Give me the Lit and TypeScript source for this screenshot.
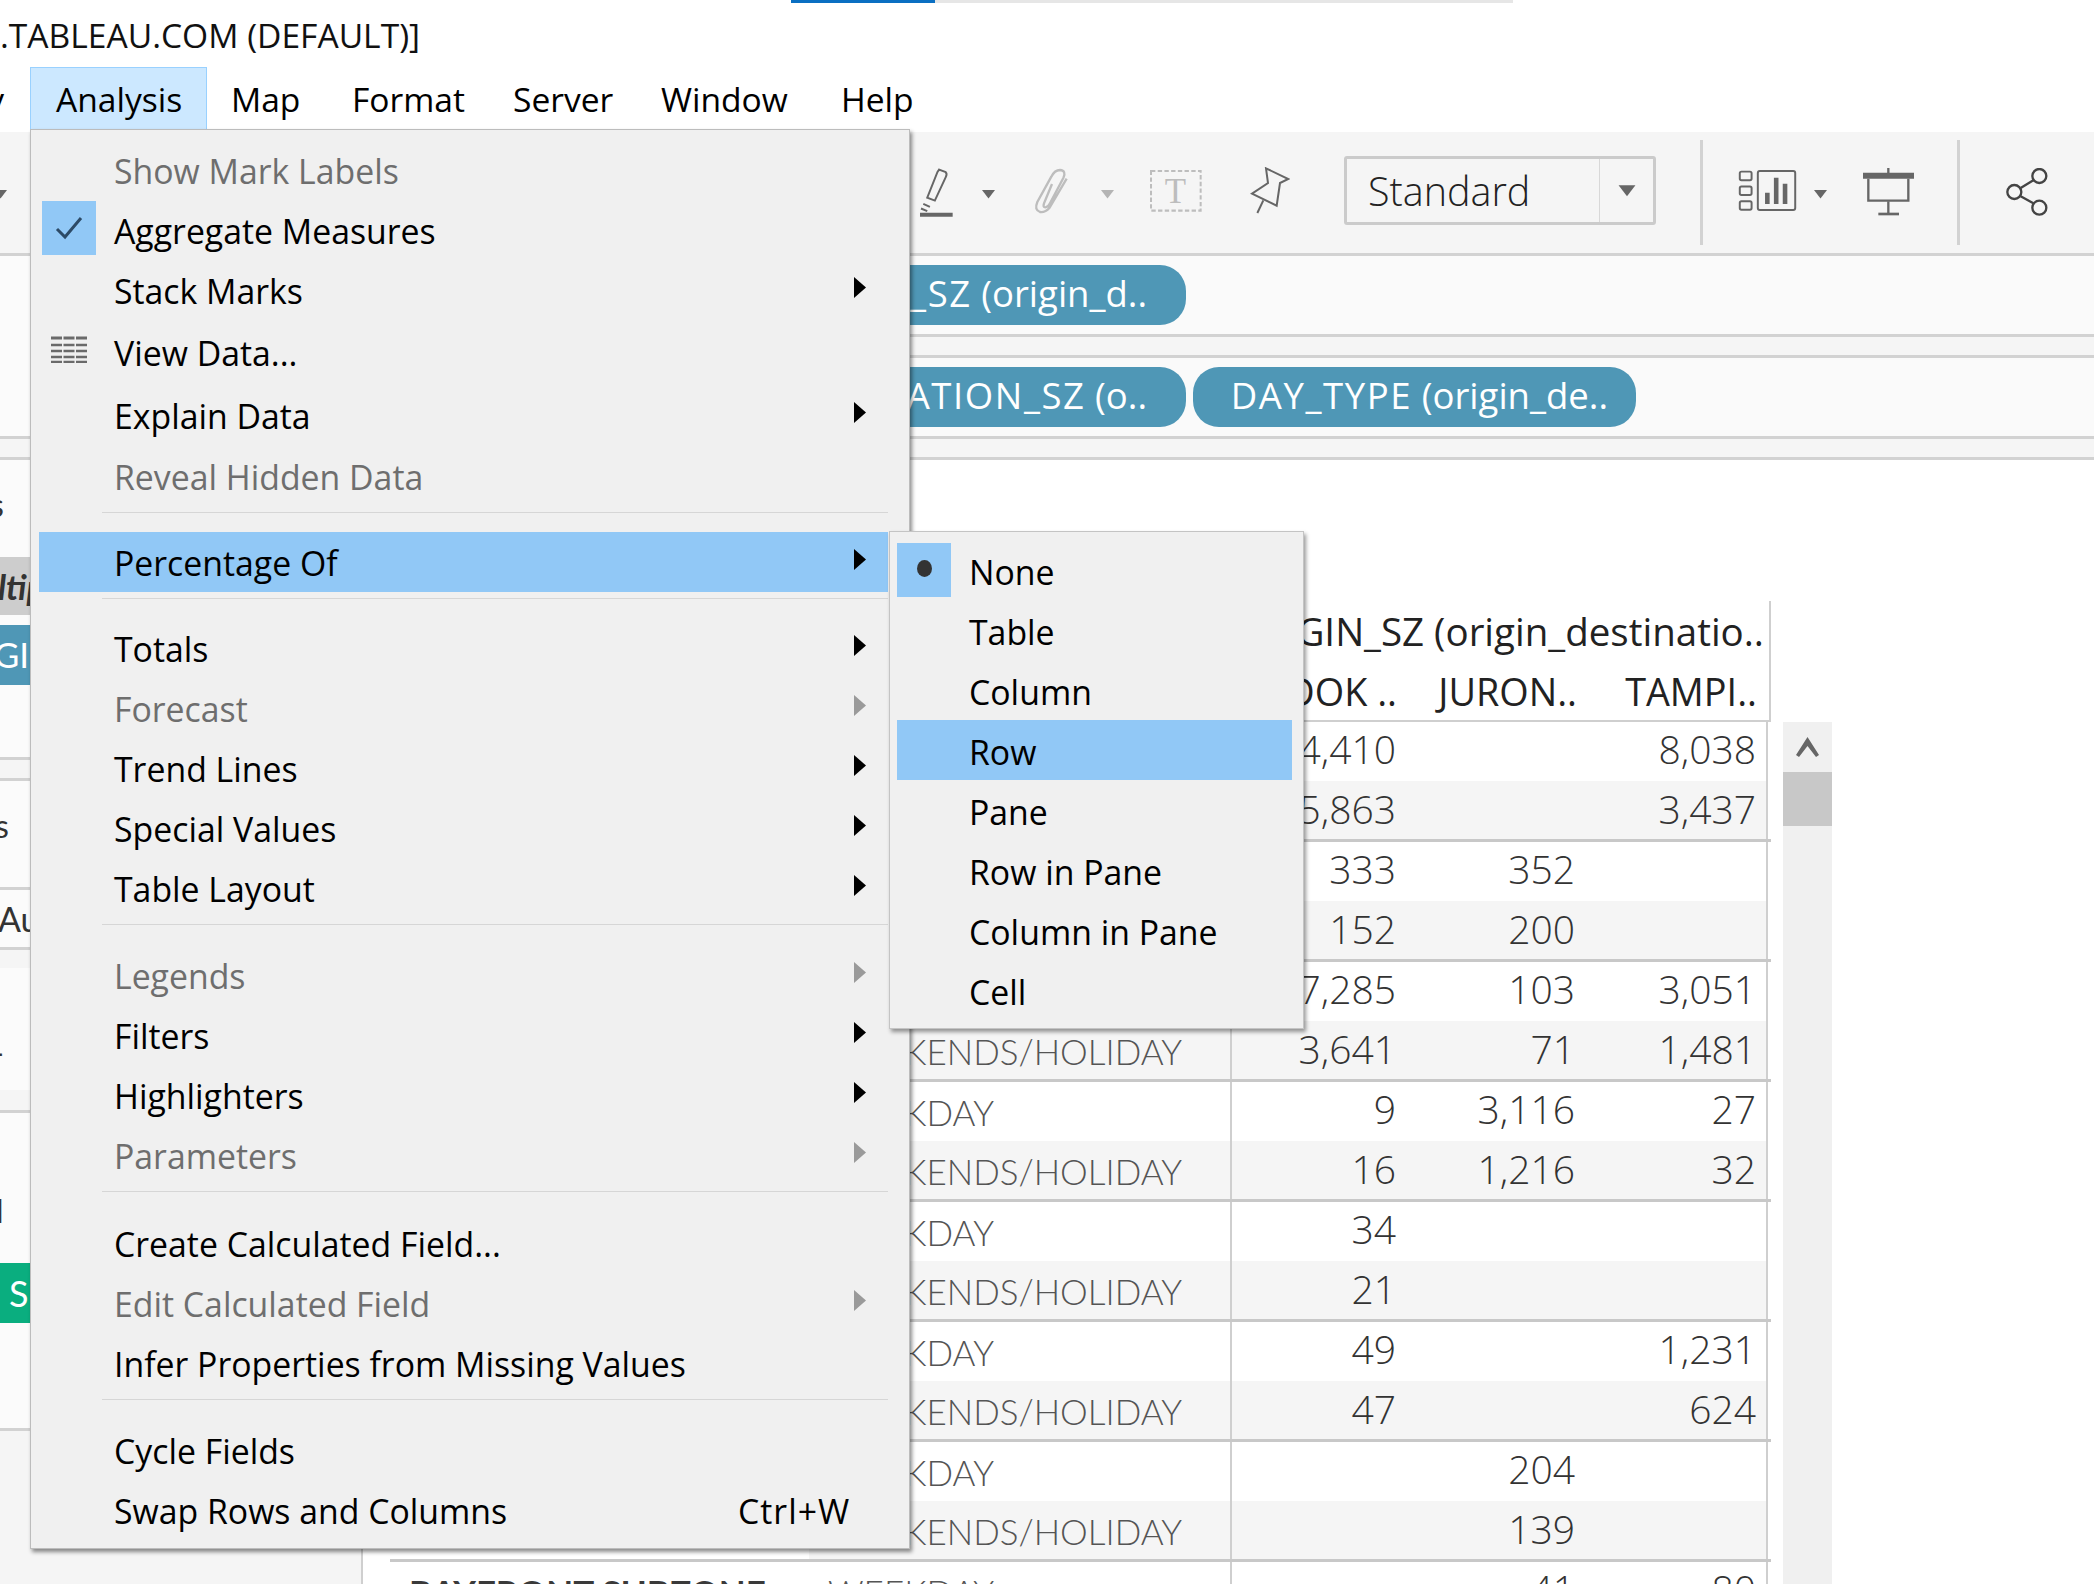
import { LitElement, html, css, svg, nothing } from "lit";
import { customElement } from "lit/decorators.js";

const tri = (cls: string) => html`<svg class="tri ${cls}" viewBox="0 0 15 10"><path d="M1 1H14L7.5 9.5Z" /></svg>`;

type Item = { t: string; off?: boolean; sub?: boolean; on?: boolean; h?: number; sep?: boolean; check?: boolean; grid?: boolean; key?: string };

const MENU: Item[] = [
  { t: "Show Mark Labels", off: true },
  { t: "Aggregate Measures", check: true },
  { t: "Stack Marks", sub: true },
  { t: "View Data...", grid: true, h: 64 },
  { t: "Explain Data", sub: true, h: 62 },
  { t: "Reveal Hidden Data", off: true },
  { t: "", sep: true, h: 26 },
  { t: "Percentage Of", sub: true, on: true },
  { t: "", sep: true, h: 26 },
  { t: "Totals", sub: true },
  { t: "Forecast", sub: true, off: true },
  { t: "Trend Lines", sub: true },
  { t: "Special Values", sub: true },
  { t: "Table Layout", sub: true },
  { t: "", sep: true, h: 27 },
  { t: "Legends", sub: true, off: true },
  { t: "Filters", sub: true },
  { t: "Highlighters", sub: true },
  { t: "Parameters", sub: true, off: true },
  { t: "", sep: true, h: 28 },
  { t: "Create Calculated Field..." },
  { t: "Edit Calculated Field", sub: true, off: true },
  { t: "Infer Properties from Missing Values" },
  { t: "", sep: true, h: 27 },
  { t: "Cycle Fields" },
  { t: "Swap Rows and Columns", key: "Ctrl+W" },
];

const SUB = ["None", "Table", "Column", "Row", "Pane", "Row in Pane", "Column in Pane", "Cell"];

const GROUPS: string[][][] = [
  [["4,410", "", "8,038"], ["5,863", "", "3,437"]],
  [["333", "352", ""], ["152", "200", ""]],
  [["7,285", "103", "3,051"], ["3,641", "71", "1,481"]],
  [["9", "3,116", "27"], ["16", "1,216", "32"]],
  [["34", "", ""], ["21", "", ""]],
  [["49", "", "1,231"], ["47", "", "624"]],
  [["", "204", ""], ["", "139", ""]],
];

const gridIcon = svg`<svg class="gridicon" viewBox="0 0 36 27"><path d="M0 2H36" stroke-width="3" stroke-dasharray="11 1.5"/><path d="M0 9H36M0 15H36M0 21H36M0 26H36" stroke-width="2.4" stroke-dasharray="11 1.5"/></svg>`;

@customElement("app-root")
export class AppRoot extends LitElement {
  static styles = css`
    :host { display: block; width: 2094px; height: 1584px; overflow: hidden; position: relative; background: #fff; font-family: "Open Sans", sans-serif; color: #000; }
    .tabbar { display: flex; height: 3px; padding-left: 791px; }
    .tabbar .a { width: 144px; background: #0a6fc2; }
    .tabbar .b { width: 578px; background: #e6e6e6; }
    .title { height: 64px; display: flex; align-items: center; font-size: 33.6px; white-space: nowrap; color: #111; box-sizing: border-box; }
    .menubar { height: 63px; display: flex; font-size: 33.6px; }
    .edge { width: 30px; display: flex; justify-content: flex-end; align-items: center; white-space: nowrap; overflow: hidden; padding-right: 26px; box-sizing: border-box; }
    .mi { display: flex; align-items: center; box-sizing: border-box; padding: 0; }
    .mi.open { background: #cce8ff; border: 1px solid #99d1ff; border-bottom: 0; width: 177px; padding: 0 0 0 25px; }
    .mi.m1 { padding: 0 0 0 24px; width: 145px; }
    .mi.m2 { width: 161px; }
    .mi.m3 { width: 148px; }
    .mi.m4 { width: 180px; }
    .toolbar { margin-top: 2px; height: 124px; box-sizing: border-box; background: #f5f5f5; border-bottom: 3px solid #d2d2d2; display: flex; align-items: center; position: relative; }
    .tb-left { width: 920px; flex: none; }
    .tb-left .tri { display: block; width: 15px; height: 10px; margin-left: -7px; fill: #666; }
    .tri { display: block; width: 15px; height: 10px; fill: #666; flex: none; margin-top: 3px; }
    .tri.light { fill: #b4b4b4; }
    .icon { display: block; flex: none; fill: none; stroke: #666; }
    .i-mark { width: 33px; height: 50px; margin: -2px 28px 0 0; }
    .i-clip { width: 36px; height: 46px; margin: -3px 30px 0 38px; }
    .i-clip path { stroke: #bdbdbd; }
    .i-text { width: 52px; height: 42px; margin: -4px 48px 0 35px; }
    .i-text text { font-family: "Liberation Serif", serif; font-size: 104px; fill: #bdbdbd; stroke: none; }
    .i-pin { width: 40px; height: 47px; margin: -4px 54px 0 0; }
    .i-show { width: 59px; height: 41px; margin: -4px 16px 0 35px; }
    .i-pres { width: 51px; height: 48px; margin: -2px 43px 0 35px; }
    .i-share { width: 42px; height: 48px; margin: -2px 0 0 46px; stroke: #444; }
    .combo { width: 312px; height: 69px; box-sizing: border-box; border: 3px solid #cbcbcb; border-radius: 3px; display: flex; margin: 0 0 4px 0; flex: none; }
    .combo .val { width: 253px; box-sizing: border-box; padding-left: 21px; font-size: 39.5px; font-weight: 300; color: #222; display: flex; align-items: center; border-right: 1px solid #d8d8d8; }
    .combo .drop { flex: 1; display: flex; align-items: center; justify-content: center; }
    .combo .drop .tri { width: 22px; height: 13px; margin-top: 0; }
    .vsep { width: 3px; height: 105px; background: #d2d2d2; flex: none; }
    .vsep.first { margin-left: 44px; }
    .body { display: flex; height: 1328px; }
    .side { width: 361px; flex: none; background: #f5f5f5; border-right: 2px solid #cfcfcf; font-family: Lato, sans-serif; color: #333; font-size: 32px; overflow: hidden; white-space: nowrap; }
    .card { background: #fbfbfb; border-bottom: 3px solid #d2d2d2; display: flex; flex-direction: column; }
    .c180 { height: 180px; }
    .c297 { height: 297px; }
    .c106 { height: 106px; }
    .c57 { height: 57px; }
    .c195 { height: 195px; }
    .gap { background: #f5f5f5; border-bottom: 3px solid #d2d2d2; height: 18px; }
    .gap.g20 { height: 20px; }
    .spacer { height: 18px; }
    .fr { display: flex; align-items: center; flex: none; }
    .f97 { height: 88px; }
    .f97 span { margin-left: -78px; }
    .f88 { height: 88px; }
    .f88 span { margin-left: -78px; }
    .multi { background: #cdcdcd; height: 58px; margin-top: 9px; font-style: italic; font-weight: 700; font-size: 34px; color: #333; }
    .multi span { margin-left: -50px; }
    .spill { height: 60px; margin-top: 10px; background: #4f97b6; color: #fff; font-size: 35px; padding-bottom: 3px; box-sizing: border-box; }
    .spill span { margin-left: -66px; }
    .auto { height: 57px; font-size: 34px; }
    .auto span { margin-left: -2px; }
    .inner { border-right: 4px solid #d2d2d2; background: #fbfbfb; width: 357px; }
    .in1 { height: 122px; }
    .in2 { height: 120px; }
    .d1 { height: 168px; }
    .d1 span { margin-left: -8px; }
    .d2 { height: 194px; }
    .d2 span { margin-left: -4px; }
    .green { height: 60px; background: #0aae7f; color: #fff; margin-top: 30px; padding-left: 9px; font-size: 36px; }
    .main { flex: 1; min-width: 0; }
    .shelf { height: 78px; background: #fafafa; border-bottom: 3px solid #d2d2d2; display: flex; align-items: center; gap: 7px; font-size: 36.5px; color: #fff; }
    .pill { height: 60px; border-radius: 26px; background: #4f97b6; display: flex; align-items: center; justify-content: flex-end; box-sizing: border-box; padding: 0 28px 5px 0; white-space: nowrap; flex: none; overflow: hidden; }
    .pill .caps { letter-spacing: 1.6px; }
    .pill.first { width: 523px; padding-right: 39px; margin-left: 300px; }
    .pill.day { width: 443px; }
    .hgap { height: 18px; background: #f5f5f5; border-bottom: 3px solid #d2d2d2; }
    .canvas { display: flex; padding: 141px 0 0 27px; gap: 12px; font-size: 39px; font-weight: 300; background: #fff; height: 900px; }
    .tbl { width: 1381px; flex: none; }
    .heads { margin-left: 841px; width: 540px; height: 121px; border-right: 2px solid #cfcfcf; border-bottom: 2px solid #cfcfcf; box-sizing: border-box; color: #222; font-size: 37.8px; font-weight: 400; }
    .h1 { height: 60px; display: flex; align-items: center; justify-content: flex-end; padding-right: 5px; white-space: nowrap; overflow: hidden; font-size: 38.5px; }
    .h2 { display: grid; grid-template-columns: 166px 180px 180px; height: 58px; align-items: center; padding: 1px 12px 0 0; text-align: right; }
    .h2 span { white-space: nowrap; }
    .grp { border-bottom: 3px solid #c8c8c8; }
    .row { display: grid; grid-template-columns: 419px 421px 178px 180px 180px; height: 58.5px; align-items: center; position: relative; }
    .row.alt .cell, .row.alt .lab { background: #f5f5f5; }
    .row.alt .cell { padding-bottom: 3px; }
    .cell, .lab { height: 100%; display: flex; align-items: center; box-sizing: border-box; padding-bottom: 5px; color: #333; }
    .cell { justify-content: flex-end; padding-right: 13px; }
    .cell.first { border-left: 2px solid #cfcfcf; padding-right: 12px; }
    .cell.last { border-right: 2px solid #cfcfcf; padding-right: 10px; }
    .lab { font-family: Lato, sans-serif; font-size: 35px; font-weight: 300; color: #555; padding: 2px 0 0 19px; white-space: nowrap; }
    .name { font-family: Lato, sans-serif; color: #3a3a3a; font-weight: 700; white-space: nowrap; display: flex; align-items: center; height: 100%; padding: 2px 0 0 19px; box-sizing: border-box; font-size: 35px; }
    .scroll { width: 49px; margin-top: 121px; background: #f0f0f0; display: flex; flex-direction: column; align-items: center; flex: none; height: 900px; }
    .scroll svg { display: block; width: 23px; height: 20px; margin: 15px 0; fill: #666; }
    .thumb { width: 100%; height: 54px; background: #c8c8c8; }
    .menu { position: absolute; left: 30px; top: 129px; width: 880px; height: 1420px; box-sizing: border-box; background: #f0f0f0; border: 1px solid #bcbcbc; box-shadow: 2px 3px 4px rgba(0,0,0,.45); padding: 10px 21px 0 8px; font-size: 33.8px; }
    .item { height: 60px; display: flex; align-items: center; position: relative; padding: 1px 0 0 75px; box-sizing: border-box; white-space: nowrap; }
    .item .arrow { position: absolute; left: 815px; top: 50%; margin-top: -13px; width: 12px; height: 21px; fill: #000; }
    .item.off { color: #6e6e6e; }
    .item.off .arrow { fill: #9a9a9a; }
    .item.on { background: #91c8f6; }
    .item .key { position: absolute; left: 699px; letter-spacing: 1px; }
    .mark { position: absolute; left: 3px; top: 1px; width: 54px; height: 54px; background: #91c8f6; display: flex; align-items: center; justify-content: center; }
    .mark svg { width: 30px; height: 30px; fill: none; stroke: #2c4a66; stroke-width: 3; }
    .gicon { position: absolute; left: 12px; top: 16px; width: 36px; height: 27px; }
    .gridicon { display: block; width: 36px; height: 27px; stroke: #6a6a6a; fill: none; }
    .sep { box-sizing: border-box; padding-top: 6px; }
    .sep i { display: block; height: 1px; background: #d6d6d6; margin-left: 63px; }
    .submenu { position: absolute; left: 889px; top: 531px; width: 415px; height: 498px; box-sizing: border-box; background: #f0f0f0; border: 1px solid #c4c4c4; box-shadow: 2px 3px 4px rgba(0,0,0,.4); padding: 8px 0 0 7px; font-size: 33.8px; z-index: 2; }
    .sub { height: 60px; width: 395px; display: flex; align-items: center; padding: 3px 0 0 72px; box-sizing: border-box; position: relative; }
    .sub.on { background: #91c8f6; }
    .sub .dot { position: absolute; left: 0; top: 3px; width: 54px; height: 54px; background: #91c8f6; display: flex; align-items: center; justify-content: center; }
    .sub .dot i { width: 15px; height: 17px; border-radius: 50%; background: #333; display: block; margin-bottom: 4px; }
  `;

  private renderRow(r: string[], alt: boolean, label: string) {
    return html`<div class="row ${alt ? "alt" : ""}">
      <div></div>
      <div class="lab">${label}</div>
      <div class="cell first">${r[0]}</div>
      <div class="cell">${r[1]}</div>
      <div class="cell last">${r[2]}</div>
    </div>`;
  }

  private renderMenu() {
    return MENU.map((m) => {
      if (m.sep) return html`<div class="sep" style="height:${m.h}px"><i></i></div>`;
      const st = m.h ? `height:${m.h}px` : nothing;
      return html`<div class="item ${m.off ? "off" : ""} ${m.on ? "on" : ""}" style=${st}>
        ${m.check ? html`<span class="mark"><svg viewBox="0 0 30 30"><path d="M3 16L11 24L27 5" /></svg></span>` : nothing}
        ${m.grid ? html`<span class="gicon">${gridIcon}</span>` : nothing}
        ${m.t}
        ${m.key ? html`<span class="key">${m.key}</span>` : nothing}
        ${m.sub ? html`<svg class="arrow" viewBox="0 0 12 21"><path d="M0 0L12 10.5L0 21Z" /></svg>` : nothing}
      </div>`;
    });
  }

  render() {
    return html`
      <div class="tabbar"><div class="a"></div><div class="b"></div></div>
      <div class="title">.TABLEAU.COM (DEFAULT)]</div>
      <div class="menubar">
        <div class="edge">Story</div>
        <div class="mi open">Analysis</div>
        <div class="mi m1">Map</div>
        <div class="mi m2">Format</div>
        <div class="mi m3">Server</div>
        <div class="mi m4">Window</div>
        <div class="mi">Help</div>
      </div>
      <div class="toolbar">
        <div class="tb-left">${tri("")}</div>
        <svg class="icon i-mark" viewBox="60 120 100 150">
          <path d="M118 127L138 135Q143 140 138 150L105 221L82 212L113 134Z" stroke-width="6"/>
          <path d="M63 245L82 253M70 231L90 240" stroke-width="6"/>
          <path d="M60 264H159" stroke-width="12"/>
        </svg>
        ${tri("")}
        <svg class="icon i-clip" viewBox="402 120 108 138" stroke-width="7">
          <path d="M456 168L432 226Q428 238 436 238Q444 238 450 226L490 150Q500 128 480 126Q464 126 454 146L412 222Q402 246 420 252Q436 254 448 240L500 152"/>
        </svg>
        ${tri("light")}
        <svg class="icon i-text" viewBox="750 123 155 125">
          <rect x="753" y="126" width="148" height="118" stroke="#bdbdbd" stroke-width="6" stroke-dasharray="13 7"/>
          <text x="826" y="222" text-anchor="middle">T</text>
        </svg>
        <svg class="icon i-pin" viewBox="1050 120 120 141" stroke-width="6">
          <path d="M1098 124L1165 156L1140 168L1130 236L1056 200L1104 168Z"/>
          <path d="M1090 220L1072 258"/>
        </svg>
        <div class="combo">
          <div class="val">Standard</div>
          <div class="drop">${tri("")}</div>
        </div>
        <div class="vsep first"></div>
        <svg class="icon i-show" viewBox="268 126 175 125" stroke-width="6">
          <rect x="271" y="131" width="36" height="26" rx="5"/>
          <rect x="271" y="176" width="36" height="26" rx="5"/>
          <rect x="271" y="221" width="36" height="26" rx="5"/>
          <rect x="326" y="129" width="114" height="119" rx="6"/>
          <path d="M355 230V195M382 230V150M409 230V168" stroke-width="14"/>
        </svg>
        ${tri("")}
        <svg class="icon i-pres" viewBox="642 118 153 144">
          <path d="M642 141H795" stroke-width="18"/>
          <path d="M718 118V134" stroke-width="7"/>
          <path d="M658 150V216H778V150" stroke-width="7"/>
          <path d="M718 218V256" stroke-width="7"/>
          <path d="M688 256H750" stroke-width="8"/>
        </svg>
        <div class="vsep"></div>
        <svg class="icon i-share" viewBox="1068 118 126 144" stroke-width="7">
          <circle cx="1168" cy="142" r="21"/>
          <circle cx="1093" cy="190" r="21"/>
          <circle cx="1168" cy="237" r="21"/>
          <path d="M1112 178L1150 155M1112 203L1150 224"/>
        </svg>
      </div>
      <div class="body">
        <div class="side">
          <div class="card c180"></div>
          <div class="gap"></div>
          <div class="card c297">
            <div class="fr f97"><span>Pages</span></div>
            <div class="fr multi"><span>Multiple Values</span></div>
            <div class="fr spill"><span>ORIGIN_SZ</span></div>
          </div>
          <div class="gap"></div>
          <div class="card c106"><div class="fr f88"><span>Marks</span></div></div>
          <div class="card c57"><div class="fr auto"><span>Automatic</span></div></div>
          <div class="spacer"></div>
          <div class="inner in1"><div class="fr d1"><span>-</span></div></div>
          <div class="gap g20"></div>
          <div class="inner in2"><div class="fr d2"><span>l</span></div></div>
          <div class="card c195"><div class="fr green">SUM</div></div>
        </div>
        <div class="main">
          <div class="shelf"><div class="pill first"><span class="caps">ORIGIN_SZ</span>&nbsp;(origin_d..</div></div>
          <div class="hgap"></div>
          <div class="shelf">
            <div class="pill first"><span class="caps">DESTINATION_SZ</span>&nbsp;(o..</div>
            <div class="pill day"><span class="caps">DAY_TYPE</span>&nbsp;(origin_de..</div>
          </div>
          <div class="hgap"></div>
          <div class="canvas">
            <div class="tbl">
              <div class="heads">
                <div class="h1">ORIGIN_SZ (origin_destinatio..</div>
                <div class="h2"><span>BEDOK ..</span><span>JURON..</span><span>TAMPI..</span></div>
              </div>
              ${GROUPS.map(
                (g) => html`<div class="grp">
                  ${this.renderRow(g[0], false, "WEEKDAY")}
                  ${this.renderRow(g[1], true, "WEEKENDS/HOLIDAY")}
                </div>`
              )}
              <div class="row">
                <div class="name">BAYFRONT SUBZONE</div>
                <div class="lab">WEEKDAY</div>
                <div class="cell first"></div>
                <div class="cell">41</div>
                <div class="cell last">80</div>
              </div>
            </div>
            <div class="scroll">
              <svg viewBox="0 0 23 20"><path d="M11.5 0L23 18L20 20L11.5 9L3 20L0 18Z"/></svg>
              <div class="thumb"></div>
            </div>
          </div>
        </div>
      </div>
      <div class="menu">${this.renderMenu()}</div>
      <div class="submenu">
        ${SUB.map(
          (s, i) => html`<div class="sub ${i === 3 ? "on" : ""}">
            ${i === 0 ? html`<span class="dot"><i></i></span>` : nothing}${s}
          </div>`
        )}
      </div>
    `;
  }
}
